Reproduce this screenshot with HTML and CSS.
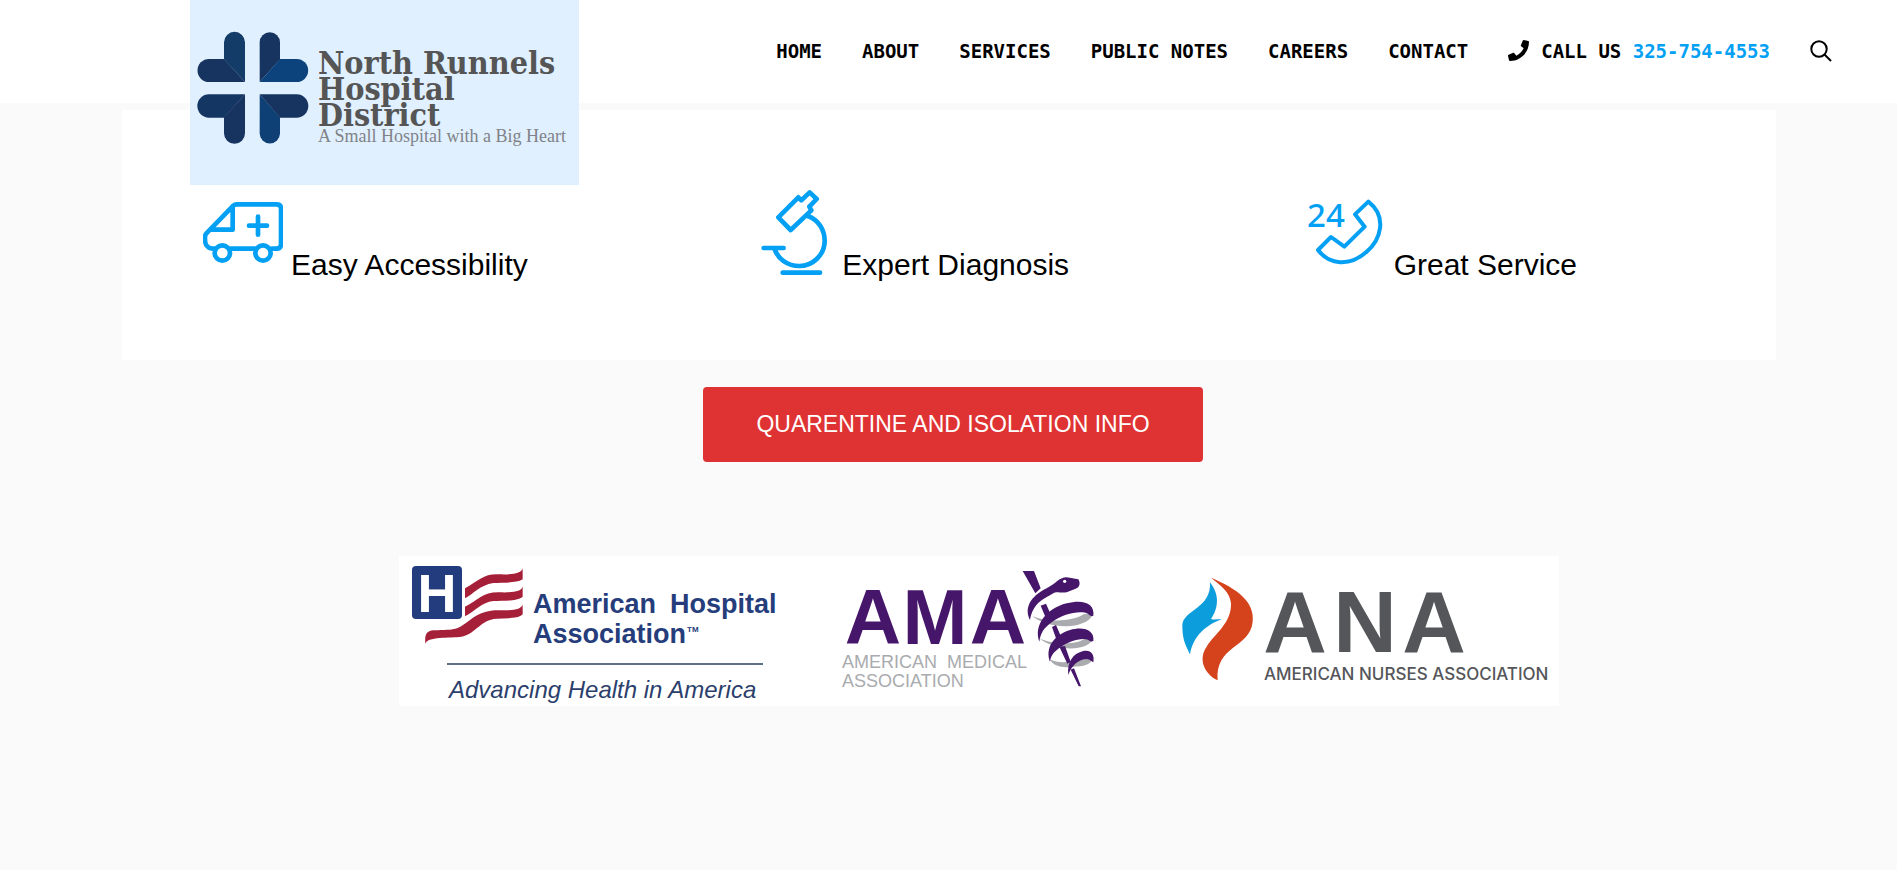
FILE: index.html
```html
<!DOCTYPE html>
<html lang="en">
<head>
<meta charset="utf-8">
<title>North Runnels Hospital District</title>
<link rel="stylesheet" href="styles.css">
</head>
<body>
<header class="site-header">
  <a class="brand" href="#" aria-label="North Runnels Hospital District">
    <svg class="brand-logo" width="389" height="185" viewBox="0 0 389 185">
      <g transform="translate(-90 0) scale(.33333)">
        <path fill="#143c69" d="M372 127a31.500 31.500 0 0 1 63 0V246L372 178Z"/>
        <path fill="#17335f" d="M327 177H372L435 246H327a34.500 34.500 0 0 1 0-69Z"/>
        <path fill="#17335f" d="M479 246V127a30.500 30.500 0 0 1 61 0V178Z"/>
        <path fill="#0c437c" d="M479 246L540 177H590a34.500 34.500 0 0 1 0 69Z"/>
        <path fill="#143663" d="M435 283H327a35 35 0 0 0 0 70H372Z"/>
        <path fill="#17335f" d="M435 283V400a31.500 31.500 0 0 1-63 0V352Z"/>
        <path fill="#17335f" d="M479 283H590a35 35 0 0 1 0 70H540Z"/>
        <path fill="#0e4075" d="M479 283V400a30.500 30.500 0 0 0 61 0V352Z"/>
      </g>
      <g class="brand-name">
        <text x="128" y="74">North Runnels</text>
        <text x="128" y="100">Hospital</text>
        <text x="128" y="126">District</text>
      </g>
      <text class="brand-tagline" x="128" y="142">A Small Hospital with a Big Heart</text>
    </svg>
  </a>
  <nav class="main-nav">
    <a href="#">HOME</a>
    <a href="#">ABOUT</a>
    <a href="#">SERVICES</a>
    <a href="#">PUBLIC NOTES</a>
    <a href="#">CAREERS</a>
    <a href="#">CONTACT</a>
    <a class="call" href="tel:325-754-4553">
      <svg width="21" height="21" viewBox="0 0 512 512" aria-hidden="true"><path d="M493.400 24.600l-104-24c-11.300-2.600-22.900 3.300-27.500 13.900l-48 112c-4.200 9.800-1.400 21.300 6.900 28l60.600 49.600c-36 76.700-98.900 140.500-177.200 177.200l-49.600-60.600c-6.800-8.300-18.200-11.100-28-6.900l-112 48C3.900 366.500-2 378.100.6 389.400l24 104C27.100 504.200 36.700 512 48 512c256.100 0 464-207.500 464-464 0-11.200-7.700-20.900-18.600-23.400z"/></svg>
      <span>CALL US <span class="number">325-754-4553</span></span>
    </a>
    <button class="search" type="button" aria-label="Search">
      <svg width="22" height="22" viewBox="0 0 22 22" aria-hidden="true"><circle cx="9" cy="9" r="7.700"/><path d="M14.500 14.500L21 21"/></svg>
    </button>
  </nav>
</header>

<main>
  <section class="features">
    <div class="feature">
      <svg class="feature-icon" width="80" height="90" viewBox="0 0 80 90" aria-hidden="true">
        <g transform="translate(-23 -15) scale(.33333)" stroke-width="14">
          <path d="M103 236H100C85 236 75 225 75 210V200Q75 194 82 187L160 107Q164 103 170 103H290Q303 103 303 116V222Q303 236 290 236H276M152 236H224M158 108V179H93M234 140V194M207 167H261"/>
          <circle cx="127" cy="249" r="23"/><circle cx="249" cy="249" r="23"/>
        </g>
      </svg>
      <h2>Easy Accessibility</h2>
    </div>
    <div class="feature">
      <svg class="feature-icon" width="80" height="90" viewBox="0 0 80 90" aria-hidden="true">
        <g transform="translate(-14 -15) scale(.33333)" stroke-width="14">
          <path d="M115 142L175 82L184 91L209 67L230 87L208 110L214 121L152 180ZM201 137C238 149 254 183 254 212C254 255 218 288 178 288C142 288 113 265 104 238M71 234H131M128 308H240"/>
        </g>
      </svg>
      <h2>Expert Diagnosis</h2>
    </div>
    <div class="feature">
      <svg class="feature-icon" width="80" height="90" viewBox="0 0 80 90" aria-hidden="true">
        <g transform="translate(-25 -15) scale(.33333)" stroke-width="12">
          <path d="M262 95L222 133L251 170L190 230L150 201L111 240C145 285 205 290 255 247C300 210 320 140 262 95Z"/>
        </g>
        <text class="hours" x="1" y="42">24</text>
      </svg>
      <h2>Great Service</h2>
    </div>
  </section>

  <div class="notice">
    <a class="notice-button" href="#">QUARENTINE AND ISOLATION INFO</a>
  </div>

  <section class="partners" aria-label="Partners">
    <div class="partner-strip">
      <svg width="400" height="150" viewBox="0 0 400 150">
        <rect x="13" y="10" width="50" height="53" rx="4" fill="#223c7d"/>
        <text class="aha-h" x="38" y="56">H</text>
        <g transform="translate(-9 -11) scale(.33333)" fill="#a61f38">
          <path d="M225 130C270 105 280 85 330 88C370 89 395 85 398 70V103C380 115 340 112 310 114C270 120 250 147 225 160Z"/>
          <path d="M225 185C265 165 280 140 330 142C370 143 395 140 398 124V155C380 170 340 166 310 168C275 172 255 198 225 214Z"/>
          <path d="M106 297C104 270 108 258 130 256C200 254 200 255 240 225C270 200 300 194 340 196C375 197 395 192 398 178V208C385 222 350 219 320 221C270 224 260 265 215 275C180 280 110 273 106 297Z"/>
        </g>
        <g class="aha-name">
          <text x="134" y="57">American</text>
          <text x="271" y="57">Hospital</text>
          <text x="134" y="87">Association</text>
          <text class="aha-tm" x="288" y="76">TM</text>
        </g>
        <path d="M48 108H364" stroke="#5f7088" stroke-width="2"/>
        <text class="aha-tagline" x="50" y="142">Advancing Health in America</text>
      </svg>
      <svg width="340" height="150" viewBox="0 0 340 150">
        <g class="ama-name">
          <text x="74" y="88">A</text>
          <text x="136" y="88">M</text>
          <text x="199" y="88">A</text>
        </g>
        <g class="ama-full">
          <text x="43" y="112">AMERICAN</text>
          <text x="148" y="112">MEDICAL</text>
          <text x="43" y="131">ASSOCIATION</text>
        </g>
        <g transform="translate(1 -11) scale(.33333)">
          <g fill="#a9abae">
            <path d="M697 213C740 233 820 230 850 208L880 203C870 252 750 258 697 213Z"/>
            <path d="M718 280C760 300 830 300 850 283L880 280C865 320 770 322 718 280Z"/>
            <path d="M748 343C775 355 800 355 840 343L878 343C870 360 850 365 820 365C785 370 762 364 748 343Z"/>
          </g>
          <g fill="#46166b">
            <path d="M668 78H702L722 130L706 145ZM722 182L738 176L750 203L736 215ZM756 246L768 240L782 272L768 280ZM778 305L795 303L812 350L802 356ZM812 374L822 370L843 424H836Z"/>
            <path d="M690 225C672 190 690 155 740 130C770 115 775 98 800 97L835 103C842 115 840 128 825 132L800 142C780 145 770 138 760 145C725 165 700 175 690 225Z"/>
            <path d="M718 290C700 240 740 190 800 175C850 162 885 175 880 212Q872 216 864 206C840 196 790 205 755 232C730 250 722 265 718 290Z"/>
            <path d="M750 350C735 310 760 270 810 255C850 243 885 255 880 288Q872 292 864 284C845 276 800 290 775 311C757 325 752 335 750 350Z"/>
            <path d="M805 390C800 350 820 325 850 318C870 313 885 325 880 352Q874 348 868 344C840 337 815 360 805 390Z"/>
          </g>
          <circle cx="794" cy="109" r="5" fill="#fff"/>
        </g>
      </svg>
      <svg width="420" height="150" viewBox="0 0 420 150">
        <g transform="translate(1 -11) scale(.33333)">
          <path fill="#0c9ddc" d="M210 112C240 150 235 190 213 222C225 226 235 222 246 222C200 240 160 270 150 328C140 305 127 290 127 240C130 195 215 190 210 112Z"/>
          <path fill="#d5431c" d="M213 98C290 130 345 170 338 230C330 310 225 300 233 406C190 385 175 340 200 305C225 265 275 235 273 175C270 140 240 120 213 98Z"/>
        </g>
        <g class="ana-name">
          <text x="156" y="96">A</text>
          <text x="226" y="96">N</text>
          <text x="295" y="96">A</text>
        </g>
        <text class="ana-full" x="125" y="124">AMERICAN NURSES ASSOCIATION</text>
      </svg>
    </div>
  </section>
</main>
</body>
</html>
```
FILE: styles.css
```css
* {
  box-sizing: border-box;
}

body {
  margin: 0;
  background: #fafafa;
  color: #000;
  font-family: "Liberation Sans", Arial, sans-serif;
}

.site-header {
  position: relative;
  display: flex;
  align-items: center;
  justify-content: flex-end;
  min-height: 103px;
  padding: 0 65px 2px;
  background: #fff;
}

.brand {
  position: absolute;
  top: 0;
  left: 10%;
  background: #e0f0ff;
}

.brand-logo {
  display: block;
}

.brand-name {
  fill: #555;
  font: bold 32px "DejaVu Serif Condensed", "DejaVu Serif", serif;
}

.brand-tagline {
  fill: #808388;
  font: 18px "Liberation Serif", serif;
}

.main-nav {
  display: flex;
  align-items: center;
  gap: 40px;
  font: bold 19px/26px "DejaVu Sans Mono", monospace;
  white-space: nowrap;
}

.main-nav a {
  color: #000;
  text-decoration: none;
}

.main-nav .call {
  display: flex;
  align-items: center;
  gap: 12px;
}

.number {
  color: #03a0f4;
}

.search {
  display: flex;
  padding: 0;
  border: 0;
  background: none;
  cursor: pointer;
}

.search svg {
  fill: none;
  stroke: #000;
  stroke-width: 2;
}

.features {
  display: grid;
  grid-template-columns: repeat(3, 1fr);
  margin: 7px 121px 0 122px;
  padding: 75px 0;
  background: #fff;
}

.feature {
  display: flex;
  align-items: baseline;
  gap: 8px;
  min-height: 100px;
  padding-left: 81px;
}

.feature h2 {
  margin: 0;
  font-size: 30px;
  font-weight: 400;
  line-height: 36px;
}

.feature-icon {
  flex: none;
  fill: none;
  stroke: #03a0f4;
  stroke-linecap: round;
  stroke-linejoin: round;
}

.hours {
  fill: #03a0f4;
  stroke: none;
  font: 500 33px "Noto Sans", sans-serif;
}

.notice {
  display: flex;
  justify-content: center;
  margin-top: 27px;
  padding-left: 9px;
}

.notice-button {
  width: 500px;
  border-radius: 4px;
  background: #df3333;
  color: #fff;
  font-size: 23px;
  line-height: 75px;
  text-align: center;
  text-decoration: none;
}

.partners {
  display: flex;
  justify-content: center;
  margin-top: 94px;
  padding-left: 61px;
}

.partner-strip {
  display: flex;
  background: #fff;
}

.aha-h {
  fill: #fff;
  font: bold 54px "Liberation Sans", sans-serif;
  text-anchor: middle;
}

.aha-name {
  fill: #263d7c;
  font: bold 27px "Liberation Sans", sans-serif;
}

.aha-tm {
  font-size: 8px;
}

.aha-tagline {
  fill: #2c3f6c;
  font: italic 24px "Liberation Sans", sans-serif;
}

.ama-name {
  fill: #46166b;
  font: bold 78px "Liberation Sans", sans-serif;
  text-anchor: middle;
}

.ama-full {
  fill: #a9abae;
  font: 18px "Liberation Sans", sans-serif;
}

.ana-name {
  fill: #55565a;
  font: bold 88px "Liberation Sans", sans-serif;
  text-anchor: middle;
}

.ana-full {
  fill: #55565a;
  font: 500 17px Inter, sans-serif;
}
```
